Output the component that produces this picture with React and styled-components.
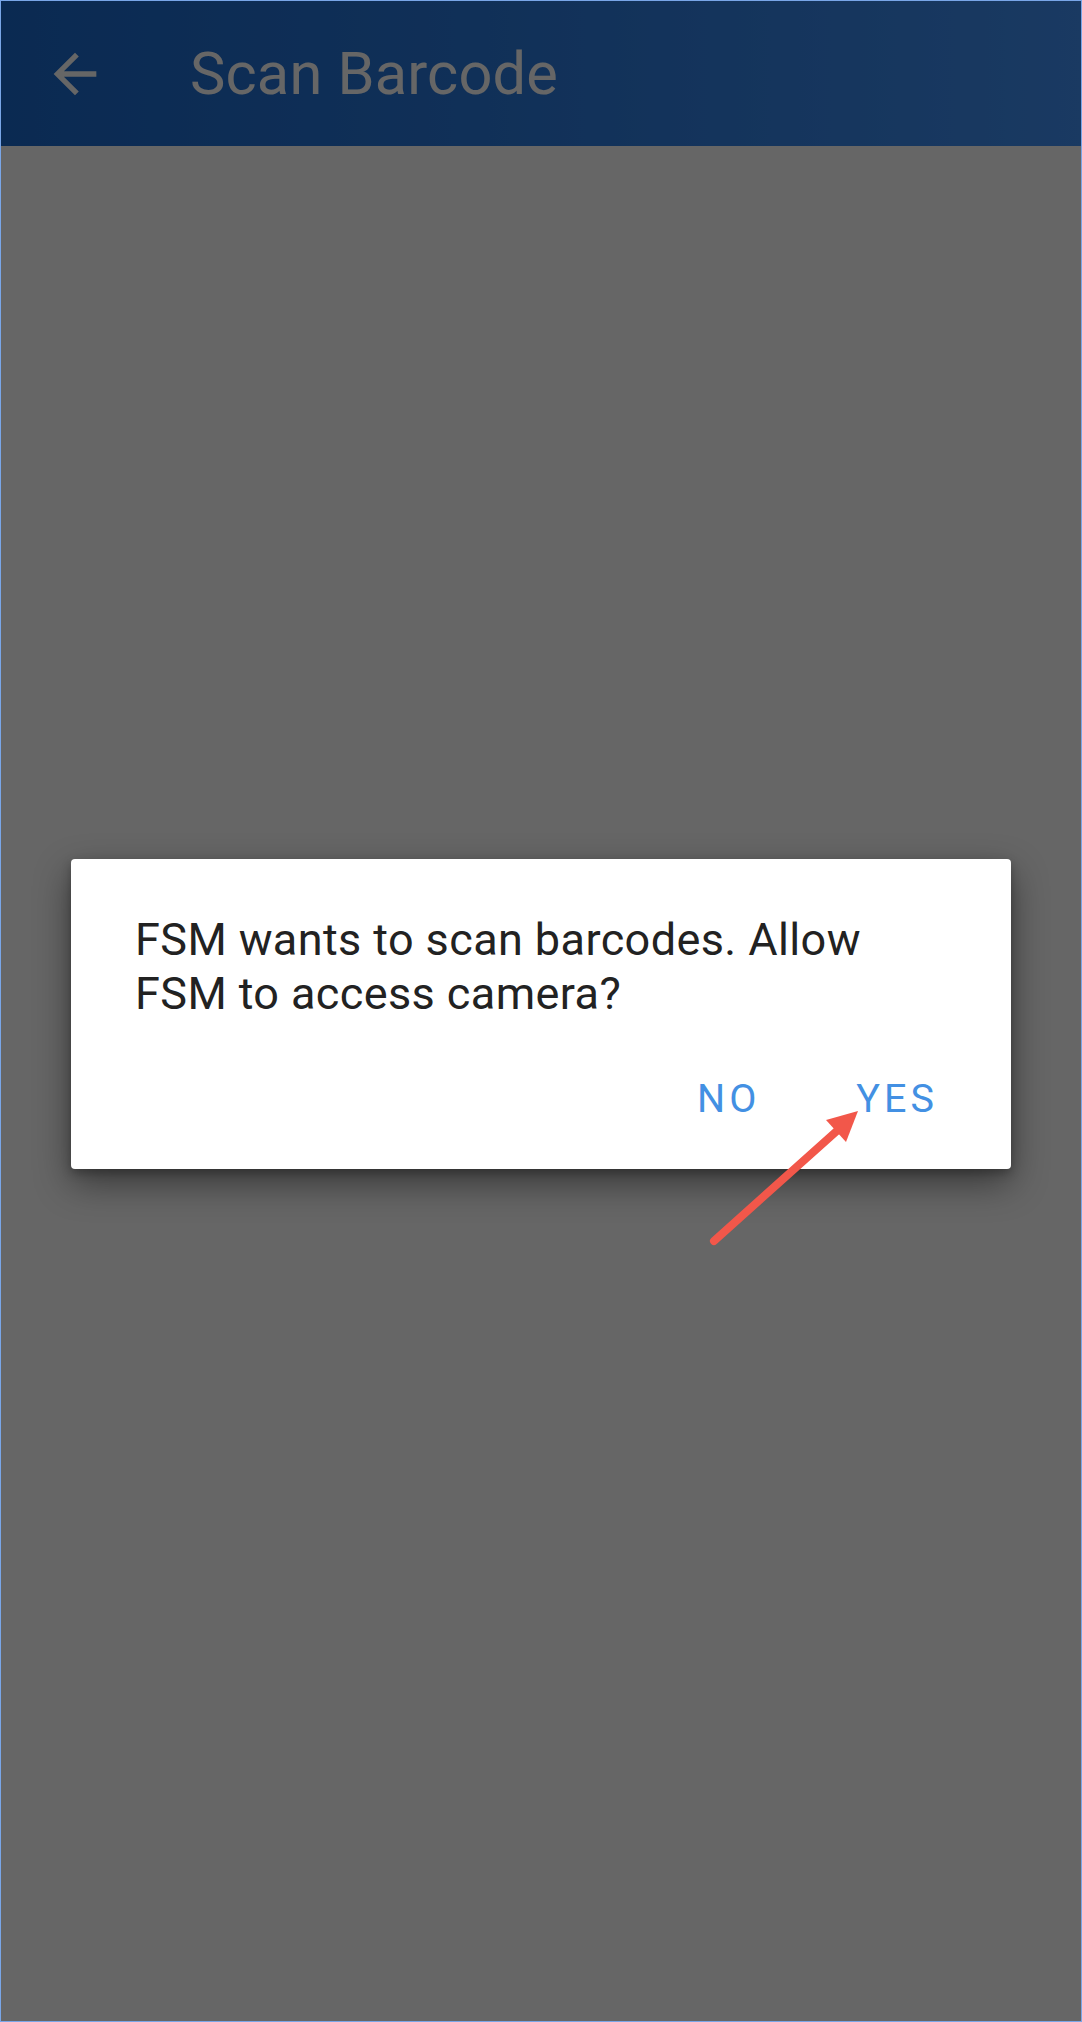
import React from "react";
import styled, {createGlobalStyle} from "styled-components";

const GlobalStyle = createGlobalStyle`
  html, body {
    margin: 0;
    padding: 0;
    background: #ffffff;
  }
  body {
    font-family: Roboto, "Noto Sans", "Liberation Sans", sans-serif;
  }
`;

const Frame = styled.div`
  position: relative;
  width: 1082px;
  height: 2022px;
  box-sizing: border-box;
  border: 1px solid #79a6e8;
  background: #ffffff;
  display: flex;
  flex-direction: column;
  overflow: hidden;
`;

const AppBar = styled.header`
  height: 145px;
  flex-shrink: 0;
  display: flex;
  align-items: center;
  background: linear-gradient(90deg, #1b69cd 0%, #2a79dc 45%, #4191f5 100%);
  color: #ffffff;
`;

const BackButton = styled.button`
  width: 64px;
  height: 64px;
  margin-left: 42px;
  padding: 0;
  border: none;
  background: none;
  color: #ffffff;
  display: flex;
  align-items: center;
  justify-content: center;

  svg {
    width: 64px;
    height: 64px;
    fill: currentColor;
  }
`;

const Title = styled.h1`
  margin: 0 0 0 83px;
  font-size: 59.5px;
  font-weight: 400;
  letter-spacing: 0.2px;
`;

const Content = styled.main`
  flex: 1;
  background: #ffffff;
`;

const Scrim = styled.div`
  position: absolute;
  inset: 0;
  background: rgba(0, 0, 0, 0.6);
  display: flex;
  align-items: center;
  justify-content: center;
  padding-top: 6px;
`;

const Dialog = styled.div`
  width: 940px;
  box-sizing: border-box;
  background: #ffffff;
  border-radius: 4px;
  padding: 54px 51px 44px 64px;
  box-shadow: 0 14px 36px rgba(0, 0, 0, 0.45), 0 4px 10px rgba(0, 0, 0, 0.25);
`;

const Message = styled.p`
  margin: 0;
  font-size: 45px;
  line-height: 54px;
  letter-spacing: 0.4px;
  color: #222222;
  max-width: 780px;
`;

const Actions = styled.div`
  display: flex;
  justify-content: flex-end;
  gap: 52px;
  margin-top: 51px;
`;

const ActionButton = styled.button`
  border: none;
  background: none;
  padding: 0 22px;
  font-family: Roboto, "Noto Sans", "Liberation Sans", sans-serif;
  font-size: 39.5px;
  line-height: 53px;
  font-weight: 400;
  letter-spacing: 4px;
  color: #4390e3;
  text-transform: uppercase;
`;

const Annotation = styled.svg`
  position: absolute;
  left: 0;
  top: 0;
  width: 1082px;
  height: 2022px;
  pointer-events: none;
`;

const ArrowBackIcon = () => (
    <svg viewBox="0 0 24 24">
        <path d="M20 11H7.83l5.59-5.59L12 4l-8 8 8 8 1.41-1.41L7.83 13H20v-2z"/>
    </svg>
);

const App = () => {
    return (
        <>
            <GlobalStyle/>
            <Frame>
                <AppBar>
                    <BackButton aria-label="Back"><ArrowBackIcon/></BackButton>
                    <Title>Scan Barcode</Title>
                </AppBar>
                <Content/>

                <Scrim>
                    <Dialog>
                        <Message>FSM wants to scan barcodes. Allow FSM to access camera?</Message>
                        <Actions>
                            <ActionButton>No</ActionButton>
                            <ActionButton>Yes</ActionButton>
                        </Actions>
                    </Dialog>
                </Scrim>

                {/* red pointer drawn over the dialog */}
                <Annotation viewBox="0 0 1082 2022">
                    <line x1="713" y1="1240" x2="838" y2="1128" stroke="#f2574a" strokeWidth="8"
                          strokeLinecap="round"/>
                    <polygon points="857,1110 825,1119 845,1141" fill="#f2574a"/>
                </Annotation>
            </Frame>
        </>
    );
};

export default App;
